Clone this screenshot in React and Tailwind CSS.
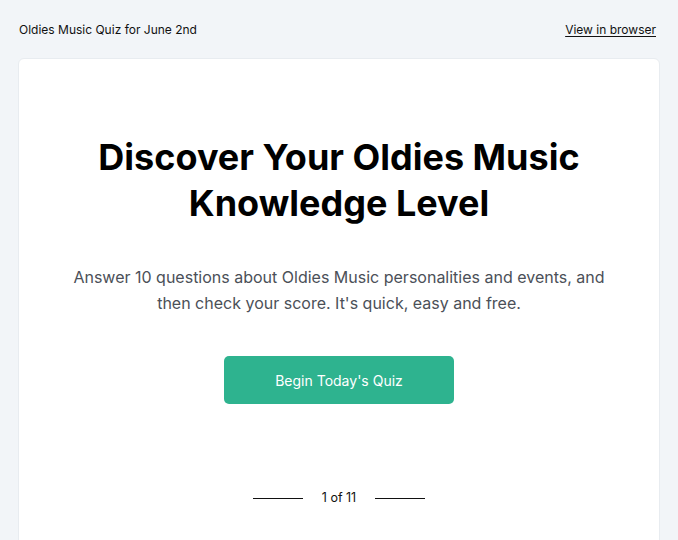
export default function App() {
  return (
    <div className="min-h-[540px] bg-[#f2f5f8] px-[18px] font-['Inter',sans-serif] text-[#111]">
      {/* Top bar */}
      <div className="flex items-center justify-between pt-[22px] pb-[20px] text-[12px] leading-[16px]">
        <span className="pl-px">Oldies Music Quiz for June 2nd</span>
        <a href="#" className="pr-[4px] underline underline-offset-2">View in browser</a>
      </div>

      {/* Card */}
      <div className="rounded-md border border-[#e8ecf0] bg-white px-10 pt-[75px] pb-10 text-center">
        <h1 className="mx-auto max-w-[520px] text-[36px] font-bold leading-[46px] text-black">
          Discover Your Oldies Music Knowledge Level
        </h1>
        <p className="mx-auto mt-[38px] max-w-[540px] text-[16px] leading-[26px] text-[#4b5058]">
          Answer 10 questions about Oldies Music personalities and events, and then check your score. It's quick, easy and free.
        </p>
        <div className="mt-[40px] flex justify-center">
          <button className="h-12 w-[230px] rounded-[5px] bg-[#2eb38f] text-[14px] text-white">
            Begin Today's Quiz
          </button>
        </div>
        <div className="mt-[85px] flex items-center justify-center gap-[19px] text-[12.5px]">
          <span className="h-px w-[50px] bg-[#111]" />
          <span>1 of 11</span>
          <span className="h-px w-[50px] bg-[#111]" />
        </div>
      </div>
    </div>
  );
}
